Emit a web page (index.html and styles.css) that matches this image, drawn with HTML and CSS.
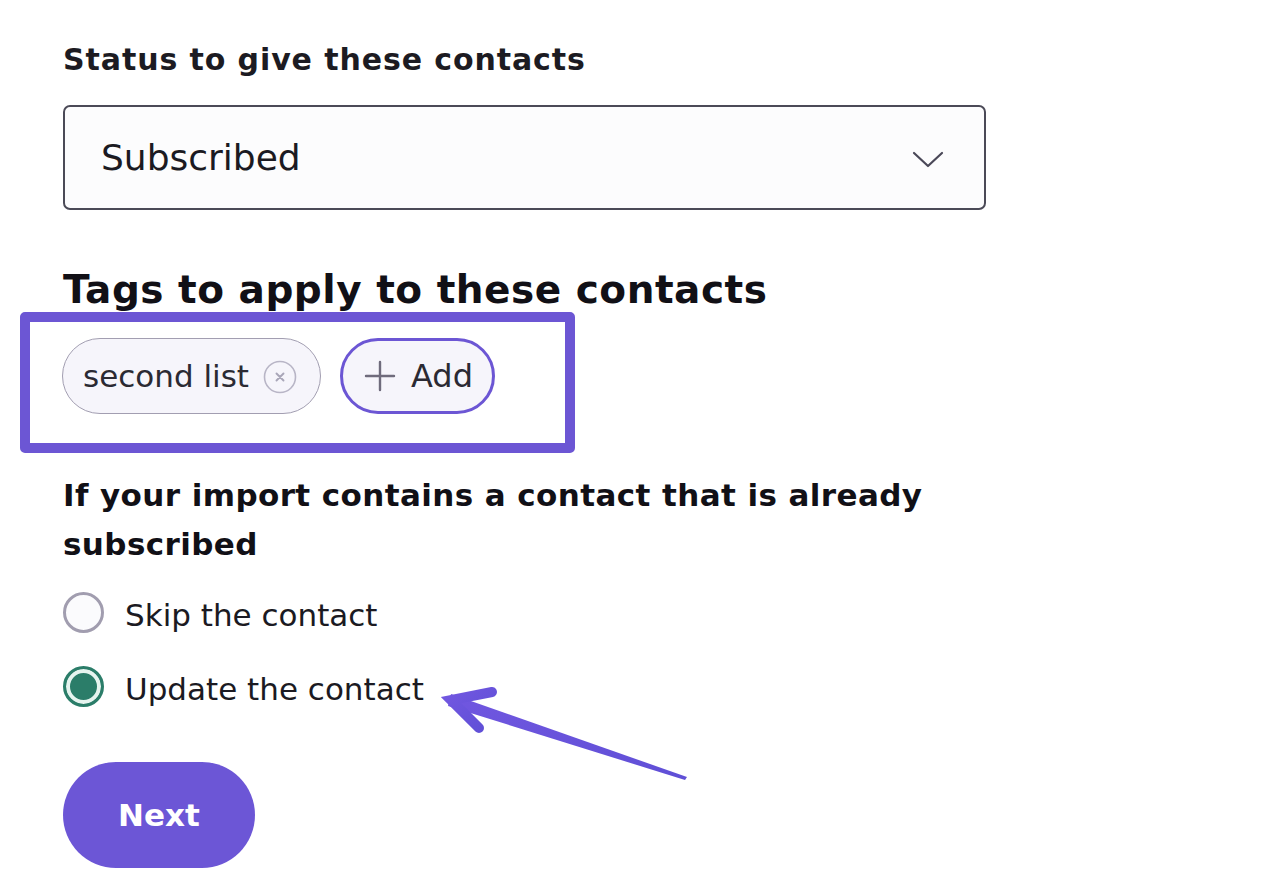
FILE: index.html
```html
<!DOCTYPE html>
<html>
<head>
<meta charset="utf-8">
<link rel="stylesheet" href="styles.css">
</head>
<body>
<main class="form">
  <label class="field-label">Status to give these contacts</label>
  <div class="select">
    <span class="select-value">Subscribed</span>
    <svg class="chevron" width="32" height="18" viewBox="0 0 32 18"><path d="M2 2 L16 15 L30 2" fill="none" stroke="#4a4858" stroke-width="2.2" stroke-linecap="round" stroke-linejoin="round"/></svg>
  </div>

  <h2 class="section-title">Tags to apply to these contacts</h2>
  <div class="tags-highlight">
    <div class="tags">
      <span class="chip"><span class="chip-text">second list</span>
        <svg class="chip-x" width="34" height="34" viewBox="0 0 34 34"><circle cx="17" cy="17" r="15.5" fill="none" stroke="#b8b5c6" stroke-width="1.6"/><path d="M13.5 13.5 L20.5 20.5 M20.5 13.5 L13.5 20.5" stroke="#a9a6b8" stroke-width="1.9" stroke-linecap="round"/></svg>
      </span>
      <button class="add-btn">
        <svg width="32" height="32" viewBox="0 0 32 32"><path d="M16 2 V30 M2 16 H30" stroke="#6f6b7c" stroke-width="2.4" stroke-linecap="round"/></svg>
        <span>Add</span>
      </button>
    </div>
  </div>

  <p class="question">If your import contains a contact that is already subscribed</p>
  <div class="radios">
    <label class="radio"><span class="dot"></span><span class="radio-text">Skip the contact</span></label>
    <label class="radio checked"><span class="dot"></span><span class="radio-text">Update the contact</span></label>
  </div>

  <button class="next">Next</button>
</main>

<svg class="arrow" width="270" height="110" viewBox="0 0 270 110">
  <defs>
    <linearGradient id="ag" x1="0" y1="0" x2="1" y2="1">
      <stop offset="0" stop-color="#7157e0"/>
      <stop offset="1" stop-color="#5f4fd6"/>
    </linearGradient>
  </defs>
  <path d="M21 14 L257 97 L255 100 L18 26 Z" fill="url(#ag)"/>
  <polyline points="62,12 21,20 49,48" fill="none" stroke="url(#ag)" stroke-width="10" stroke-linecap="round" stroke-linejoin="miter"/>
</svg>
</body>
</html>
```
FILE: styles.css
```css
* { box-sizing: border-box; }
html, body { margin: 0; padding: 0; background: #ffffff; }
body {
  font-family: "DejaVu Sans", "Open Sans", sans-serif;
  color: #1a1920;
  width: 1276px;
  height: 882px;
  overflow: hidden;
  position: relative;
}
.form {
  padding: 38px 0 0 63px;
  display: flex;
  flex-direction: column;
  align-items: flex-start;
}
.field-label {
  font-size: 30px;
  font-weight: 700;
  letter-spacing: 0.9px;
  line-height: 44px;
  margin-bottom: 23px;
  color: #1c1b22;
}
.select {
  width: 923px;
  height: 105px;
  border: 2px solid #4b4a57;
  border-radius: 7px;
  background: #fcfcfd;
  display: flex;
  align-items: center;
  justify-content: space-between;
  padding: 0 40px 0 36px;
}
.select-value {
  font-size: 36px;
  color: #1b1a22;
}
.chevron { margin-top: 4px; }
.section-title {
  font-size: 39px;
  font-weight: 700;
  letter-spacing: 0.5px;
  line-height: 46px;
  margin: 57px 0 0 0;
  color: #111016;
}
.tags-highlight {
  margin-left: -43px;
  margin-top: -1px;
  width: 555px;
  height: 141px;
  border: 10px solid #6c56d4;
  border-radius: 5px;
  padding: 16px 0 0 32px;
}
.tags {
  display: flex;
  gap: 19px;
  align-items: center;
}
.chip {
  height: 76px;
  width: 259px;
  border: 1.5px solid #a29eb1;
  border-radius: 38px;
  background: #f6f5fb;
  display: flex;
  align-items: center;
  padding: 0 0 0 20px;
  font-size: 31px;
  color: #2b2a33;
  gap: 14px;
}
.chip-x { flex: none; margin-top: 2px; }
.add-btn {
  height: 76px;
  width: 155px;
  border: 3px solid #6c56d4;
  border-radius: 38px;
  background: #f6f5fb;
  display: flex;
  align-items: center;
  padding: 0 0 0 21px;
  gap: 15px;
  font-family: inherit;
  font-size: 32px;
  color: #2b2a33;
}
.question {
  font-size: 31px;
  font-weight: 700;
  letter-spacing: 0.4px;
  line-height: 49px;
  width: 900px;
  margin: 18px 0 0 0;
  color: #111016;
}
.radios {
  display: flex;
  flex-direction: column;
  gap: 33px;
  margin-top: 23px;
}
.radio {
  display: flex;
  align-items: center;
  gap: 21px;
  font-size: 31px;
  line-height: 36px;
  color: #1b1a22;
}
.radio-text { padding-top: 4px; }
.dot {
  width: 41px;
  height: 41px;
  border-radius: 50%;
  border: 3px solid #a19daf;
  background: #fbfbfd;
  flex: none;
}
.radio.checked .dot {
  border-color: #2b7d69;
  background: #2b7d69;
  box-shadow: inset 0 0 0 4px #e6f4ef;
}
.next {
  margin-top: 55px;
  width: 192px;
  height: 106px;
  border: none;
  border-radius: 53px;
  background: #6c56d6;
  color: #ffffff;
  font-family: inherit;
  font-size: 31px;
  font-weight: 700;
}
.arrow {
  position: absolute;
  left: 430px;
  top: 680px;
}
```
